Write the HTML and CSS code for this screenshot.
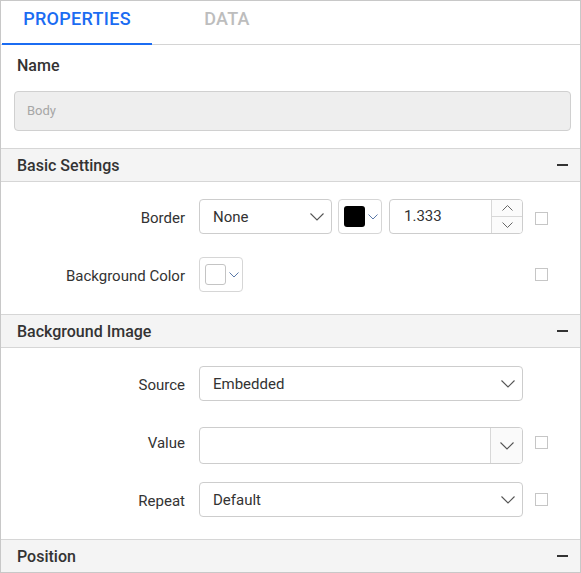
FILE: index.html
```html
<!DOCTYPE html>
<html>
<head>
<meta charset="utf-8">
<link rel="stylesheet" href="styles.css">
</head>
<body>
<div class="panel">
  <div class="tabs">
    <div class="tab active">PROPERTIES</div>
    <div class="tab">DATA</div>
  </div>

  <div class="name-block">
    <div class="name-label">Name</div>
    <div class="name-input">Body</div>
  </div>

  <div class="section">
    <div class="section-head"><span>Basic Settings</span><span class="minus"></span></div>
    <div class="section-body body-basic">
      <div class="row">
        <div class="label">Border</div>
        <div class="controls">
          <div class="dropdown dd-border">
            <span class="dd-text">None</span>
            <svg class="chev" width="14" height="8" viewBox="0 0 14 8"><polyline points="0.5,0.5 7,7 13.5,0.5" fill="none" stroke="#555" stroke-width="1.1"/></svg>
          </div>
          <div class="colorpick">
            <span class="swatch swatch-black"></span>
            <svg class="chev-sm" width="10" height="6" viewBox="0 0 10 6"><polyline points="0.5,0.5 5,5 9.5,0.5" fill="none" stroke="#5b79a8" stroke-width="1"/></svg>
          </div>
          <div class="numeric">
            <span class="num-text">1.333</span>
            <div class="spin">
              <div class="spin-btn"><svg width="11" height="6" viewBox="0 0 11 6"><polyline points="0.5,5.5 5.5,0.5 10.5,5.5" fill="none" stroke="#666" stroke-width="1"/></svg></div>
              <div class="spin-btn spin-down"><svg width="11" height="6" viewBox="0 0 11 6"><polyline points="0.5,0.5 5.5,5.5 10.5,0.5" fill="none" stroke="#666" stroke-width="1"/></svg></div>
            </div>
          </div>
        </div>
        <span class="check check-border"></span>
      </div>
      <div class="row row-bg">
        <div class="label">Background Color</div>
        <div class="controls">
          <div class="colorpick">
            <span class="swatch swatch-white"></span>
            <svg class="chev-sm" width="10" height="6" viewBox="0 0 10 6"><polyline points="0.5,0.5 5,5 9.5,0.5" fill="none" stroke="#5b79a8" stroke-width="1"/></svg>
          </div>
        </div>
        <span class="check"></span>
      </div>
    </div>
  </div>

  <div class="section">
    <div class="section-head"><span>Background Image</span><span class="minus"></span></div>
    <div class="section-body body-image">
      <div class="row">
        <div class="label">Source</div>
        <div class="dropdown">
          <span class="dd-text">Embedded</span>
          <svg class="chev" width="14" height="8" viewBox="0 0 14 8"><polyline points="0.5,0.5 7,7 13.5,0.5" fill="none" stroke="#555" stroke-width="1.1"/></svg>
        </div>
        <span></span>
      </div>
      <div class="row row-value">
        <div class="label label-up">Value</div>
        <div class="combo">
          <span class="combo-text"></span>
          <div class="combo-btn">
            <svg width="14" height="8" viewBox="0 0 14 8"><polyline points="0.5,0.5 7,7 13.5,0.5" fill="none" stroke="#555" stroke-width="1.1"/></svg>
          </div>
        </div>
        <span class="check check-up"></span>
      </div>
      <div class="row row-repeat">
        <div class="label">Repeat</div>
        <div class="dropdown">
          <span class="dd-text">Default</span>
          <svg class="chev" width="14" height="8" viewBox="0 0 14 8"><polyline points="0.5,0.5 7,7 13.5,0.5" fill="none" stroke="#555" stroke-width="1.1"/></svg>
        </div>
        <span class="check"></span>
      </div>
    </div>
  </div>

  <div class="section">
    <div class="section-head"><span>Position</span><span class="minus"></span></div>
  </div>
</div>
</body>
</html>
```

FILE: styles.css
```css
* { box-sizing: border-box; }
html, body { margin: 0; padding: 0; background: #fff; }
body {
  font-family: Roboto, "Liberation Sans", Arial, sans-serif;
  color: #333;
}
.panel {
  width: 581px;
  height: 573px;
  border: 1px solid #c8c8c8;
  overflow: hidden;
  background: #fff;
}

/* tabs */
.tabs {
  display: flex;
  height: 44px;
  padding-left: 1px;
  border-bottom: 1px solid #d4d4d4;
}
.tab {
  width: 150px;
  height: 44px;
  padding-top: 8px;
  line-height: 20px;
  text-align: center;
  font-size: 18px;
  letter-spacing: 0.3px;
  font-weight: 500;
  color: #bdbdbd;
  border-bottom: 2px solid transparent;
}
.tab.active {
  color: #1b6cf2;
  border-bottom-color: #1b6cf2;
}

/* name */
.name-block {
  padding: 11px 9px 17px 13px;
}
.name-label {
  font-size: 16px;
  font-weight: 500;
  line-height: 20px;
  padding-left: 3px;
  color: #333;
}
.name-input {
  margin-top: 15px;
  height: 40px;
  border: 1px solid #d0d0d0;
  border-radius: 4px;
  background: #eeeeee;
  color: #a6a6a6;
  font-size: 13px;
  line-height: 38px;
  padding-left: 12px;
}

/* sections */
.section-head {
  display: flex;
  align-items: center;
  justify-content: space-between;
  height: 34px;
  border-top: 1px solid #d6d6d6;
  border-bottom: 1px solid #d6d6d6;
  background: #f4f4f4;
  padding: 0 12px 0 16px;
  font-size: 16px;
  font-weight: 500;
  color: #333;
}
.minus {
  width: 11px;
  height: 2px;
  background: #333;
}
.section-body {
  display: flex;
  flex-direction: column;
}
.body-basic { padding: 17px 0 22px; gap: 23px; }
.body-image { padding: 18px 0 22px; }
.row-value { margin-top: 26px; }
.row-repeat { margin-top: 18px; }

.row {
  display: grid;
  grid-template-columns: 186px 324px 13px;
  column-gap: 12px;
  align-items: center;
  font-size: 15px;
}
.label {
  text-align: right;
  padding-right: 2px;
  padding-top: 3px;
  line-height: 20px;
  color: #333;
}
.label-up { padding-top: 0; margin-bottom: 6px; }

.controls {
  display: flex;
  align-items: center;
}

.dropdown {
  height: 35px;
  border: 1px solid #cdcdcd;
  border-radius: 4px;
  display: flex;
  align-items: center;
  justify-content: space-between;
  padding: 0 7px 0 13px;
  background: #fff;
}
.dd-border { width: 133px; padding-right: 7px; }
.dd-text { line-height: 20px; color: #333; }
.chev { display: block; margin-top: 1px; }

.colorpick {
  width: 44px;
  height: 35px;
  margin-left: 6px;
  border: 1px solid #d6d6d6;
  border-radius: 4px;
  display: flex;
  align-items: center;
  padding-left: 5px;
}
.row-bg .colorpick { margin-left: 0; }
.swatch {
  width: 21px;
  height: 21px;
  border-radius: 3px;
  display: block;
}
.swatch-black { background: #000; }
.swatch-white { background: #fff; border: 1px solid #c4c4c4; }
.chev-sm { display: block; margin-left: 3px; margin-top: 1px; }

.numeric {
  width: 134px;
  height: 35px;
  margin-left: 7px;
  border: 1px solid #cdcdcd;
  border-radius: 4px;
  display: flex;
  overflow: hidden;
}
.num-text {
  flex: 1;
  padding-left: 14px;
  line-height: 33px;
  color: #333;
}
.spin {
  width: 31px;
  border-left: 1px solid #d8d8d8;
  display: flex;
  flex-direction: column;
  background: #fbfbfb;
}
.spin-btn {
  flex: 1;
  display: flex;
  align-items: center;
  justify-content: center;
}
.spin-btn svg { display: block; }
.spin-down { border-top: 1px solid #d8d8d8; }

.combo {
  height: 37px;
  border: 1px solid #cdcdcd;
  border-radius: 4px;
  display: flex;
  overflow: hidden;
}
.combo-text { flex: 1; }
.combo-btn {
  width: 32px;
  border-left: 1px solid #d8d8d8;
  background: #fafafa;
  display: flex;
  align-items: center;
  justify-content: center;
}
.combo-btn svg { display: block; margin-top: 1px; }

.check {
  width: 13px;
  height: 13px;
  border: 1px solid #c6c6c6;
  display: block;
}
.check-border { margin-top: 4px; }
.check-up { margin-bottom: 7px; }
```
